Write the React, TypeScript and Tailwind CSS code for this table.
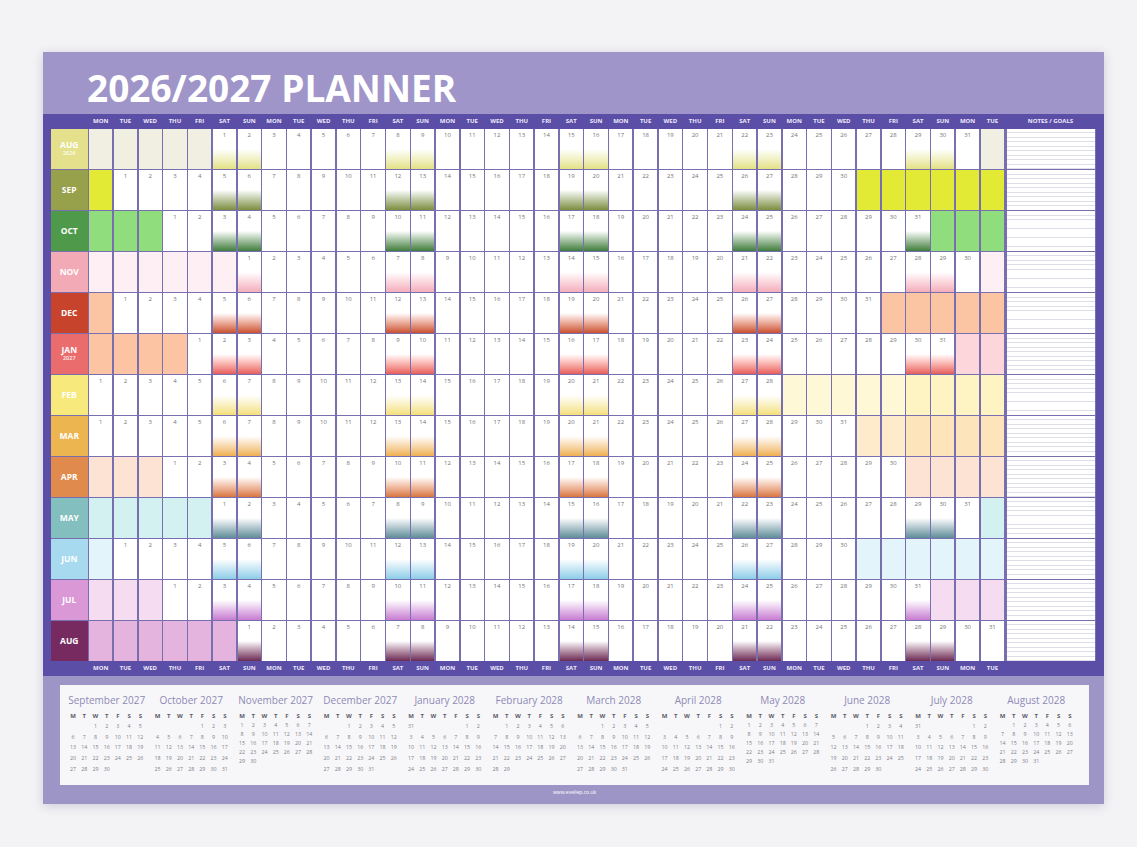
type Month = {
  name: string
  year?: string
  start: number
  days: number
  label: string
  lead: string
  trail: string
  trail2?: string
  wk: string
}

const DAYS = ["MON", "TUE", "WED", "THU", "FRI", "SAT", "SUN"]

const MONTHS: Month[] = [
  { name: "AUG", year: "2026", start: 6, days: 31, label: "bg-[#e4e08c]", lead: "bg-[#f0efe1]", trail: "bg-[#f0efe1]", wk: "to-[#e4e184]" },
  { name: "SEP", start: 2, days: 30, label: "bg-[#97a04a]", lead: "bg-[#e3ea36]", trail: "bg-[#e3ea36]", wk: "to-[#7d8e3c]" },
  { name: "OCT", start: 4, days: 31, label: "bg-[#4e9a4a]", lead: "bg-[#8fdd7c]", trail: "bg-[#8fdd7c]", wk: "to-[#3f7d3c]" },
  { name: "NOV", start: 7, days: 30, label: "bg-[#f2aab6]", lead: "bg-[#fdeff3]", trail: "bg-[#fdeff3]", wk: "to-[#f3aebb]" },
  { name: "DEC", start: 2, days: 31, label: "bg-[#c8432b]", lead: "bg-[#fbc4a2]", trail: "bg-[#fbc4a2]", wk: "to-[#c84f2e]" },
  { name: "JAN", year: "2027", start: 5, days: 31, label: "bg-[#ea6c6c]", lead: "bg-[#fcc4a2]", trail: "bg-[#fcd6da]", wk: "to-[#e55d5d]" },
  { name: "FEB", start: 1, days: 28, label: "bg-[#f8e97c]", lead: "bg-[#fef8d6]", trail: "bg-[#fef8d6]", trail2: "bg-[#fdf3c3]", wk: "to-[#f5e07a]" },
  { name: "MAR", start: 1, days: 31, label: "bg-[#ecb550]", lead: "bg-[#fdebcc]", trail: "bg-[#fdebcc]", trail2: "bg-[#fde4bb]", wk: "to-[#eeb04e]" },
  { name: "APR", start: 4, days: 30, label: "bg-[#e08b4d]", lead: "bg-[#fde3d3]", trail: "bg-[#fde3d3]", wk: "to-[#d8753e]" },
  { name: "MAY", start: 6, days: 31, label: "bg-[#83bfbe]", lead: "bg-[#d4f1f1]", trail: "bg-[#d4f1f1]", wk: "to-[#5f8d99]" },
  { name: "JUN", start: 2, days: 30, label: "bg-[#a8daef]", lead: "bg-[#e3f5fb]", trail: "bg-[#e3f5fb]", wk: "to-[#8ccde8]" },
  { name: "JUL", start: 4, days: 31, label: "bg-[#da98d7]", lead: "bg-[#f6dcf1]", trail: "bg-[#f6dcf1]", wk: "to-[#c67bd0]" },
  { name: "AUG", start: 7, days: 31, label: "bg-[#772a60]", lead: "bg-[#e4b4df]", trail: "bg-[#e4b4df]", wk: "to-[#6a2a55]" },
]

// mini calendars: first weekday (0 = Mon), length, tight rows
const MINI = [
  { title: "September 2027", start: 2, days: 30 },
  { title: "October 2027", start: 4, days: 31 },
  { title: "November 2027", start: 0, days: 30, tight: true },
  { title: "December 2027", start: 2, days: 31 },
  { title: "January 2028", start: 5, days: 31 },
  { title: "February 2028", start: 1, days: 29 },
  { title: "March 2028", start: 2, days: 31 },
  { title: "April 2028", start: 5, days: 30 },
  { title: "May 2028", start: 0, days: 31, tight: true },
  { title: "June 2028", start: 3, days: 30 },
  { title: "July 2028", start: 5, days: 31 },
  { title: "August 2028", start: 1, days: 31, tight: true },
]

const COLS = Array.from({ length: 37 }, (_, i) => i + 1)
const GRID = "grid grid-cols-[36.5px_repeat(37,minmax(0,1fr))_90px] gap-x-[1.5px]"

function weeks(start: number, days: number) {
  const rows: (number | null)[][] = []
  let row: (number | null)[] = Array(7).fill(null)
  let col = start
  for (let d = 1; d <= days; d++) {
    row[col] = d
    col++
    if (col === 7) {
      rows.push(row)
      row = Array(7).fill(null)
      col = 0
    }
  }
  if (col > 0) rows.push(row)
  // wrap a 6th week into the empty slots of the first
  if (rows.length > 5) {
    const extra = rows.pop()!
    extra.forEach((d, i) => {
      if (d !== null && rows[0][i] === null) rows[0][i] = d
    })
  }
  return rows
}

function DayRow() {
  return (
    <div className={`${GRID} h-[15px]`}>
      <div />
      {COLS.map((c) => (
        <div key={c} className="text-center text-[6px] font-bold leading-[15px] text-[#eeeafa]">
          {DAYS[(c - 1) % 7]}
        </div>
      ))}
      <div />
    </div>
  )
}

function MonthRow({ m }: { m: Month }) {
  return (
    <div className={`${GRID} h-[39.5px]`}>
      {/* month label */}
      <div className={`${m.label} flex flex-col items-center justify-center text-white`}>
        <div className="text-[8.5px] font-bold leading-[10px]">{m.name}</div>
        {m.year && <div className="text-[5.5px] font-semibold leading-[7px] opacity-90">{m.year}</div>}
      </div>

      {COLS.map((c) => {
        const day = c - m.start + 1
        const weekend = (c - 1) % 7 >= 5
        if (day < 1) return <div key={c} className={m.lead} />
        if (day > m.days)
          return <div key={c} className={m.trail2 && c >= 34 ? m.trail2 : m.trail} />
        return (
          <div
            key={c}
            className={`pt-[3px] text-center text-[6px] leading-[6px] text-[#747474] ${
              weekend ? `bg-linear-to-b from-white from-50% ${m.wk}` : "bg-white"
            }`}
          >
            {day}
          </div>
        )
      })}

      {/* notes */}
      <div className="ml-[1.5px] bg-[image:repeating-linear-gradient(to_bottom,#ffffff_0px,#ffffff_3.5px,#dedde8_3.5px,#dedde8_4.5px)]" />
    </div>
  )
}

function MiniCal({ title, start, days, tight }: { title: string; start: number; days: number; tight?: boolean }) {
  const rows = weeks(start, days)
  return (
    <div className="w-[78.4px]">
      <div className="text-center text-[10px] leading-[12px] text-[#8e89b6]">{title}</div>
      <div className="mt-[5px] grid grid-cols-7 text-center text-[6px] font-bold leading-[10px] text-[#5c5c66]">
        {["M", "T", "W", "T", "F", "S", "S"].map((d, i) => (
          <div key={i}>{d}</div>
        ))}
      </div>
      {rows.map((r, i) => (
        <div
          key={i}
          className={`grid grid-cols-7 text-center text-[5.3px] text-[#7f7f88] ${tight ? "leading-[9px]" : "leading-[10.7px]"}`}
        >
          {r.map((d, j) => (
            <div key={j}>{d ?? ""}</div>
          ))}
        </div>
      ))}
    </div>
  )
}

export default function App() {
  return (
    <div className="h-[847px] w-[1137px] overflow-hidden bg-[#f3f3f6] pt-[52px] font-['Open_Sans',sans-serif]">
      <div className="ml-[43px] h-[752px] w-[1061px] shadow-[0_2px_10px_rgba(40,30,80,0.18)]">
        {/* HEADER */}
        <div className="h-[62px] bg-[#9f95c9] pl-[44px] pt-[17px]">
          <div className="text-[37px] font-bold leading-[37px] text-white">2026/2027 PLANNER</div>
        </div>

        {/* MAIN GRID */}
        <div className="h-[562px] bg-[#5b4ea6] pl-[8px] pr-[8.5px]">
          <div className="relative">
            <DayRow />
            <div className="absolute right-0 top-0 w-[90px] text-center text-[6px] font-bold leading-[15px] text-[#eeeafa]">
              NOTES / GOALS
            </div>
          </div>
          <div className="flex flex-col gap-y-[1.5px] bg-[#786fb1]">
            {MONTHS.map((m, i) => (
              <MonthRow key={i} m={m} />
            ))}
          </div>
          <DayRow />
        </div>

        {/* YEAR-AHEAD STRIP */}
        <div className="h-[128px] bg-[#9e95c7] pl-[17px] pt-[9px]">
          <div className="grid h-[100px] w-[1029px] grid-cols-12 bg-[#f7f7f9] px-[7.5px] pt-[9px]">
            {MINI.map((mc) => (
              <MiniCal key={mc.title} {...mc} />
            ))}
          </div>
          <div className="mt-[4px] w-[1029px] text-center text-[5px] leading-[6px] text-white">www.eveliep.co.uk</div>
        </div>
      </div>
    </div>
  )
}
